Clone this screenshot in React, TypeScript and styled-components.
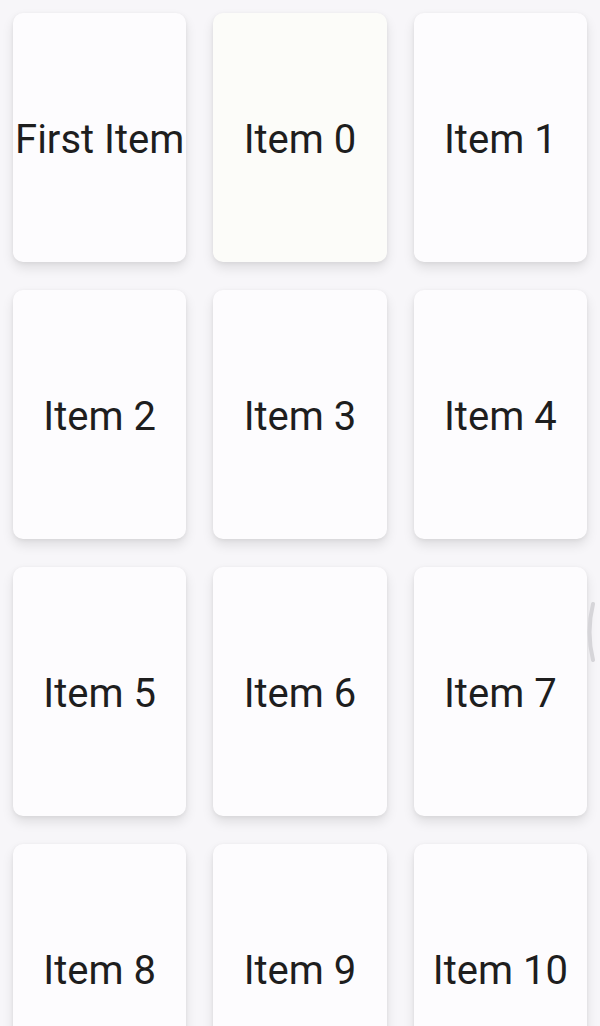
import React from 'react';
import styled, { createGlobalStyle } from 'styled-components';

const GlobalStyle = createGlobalStyle`
  html, body {
    margin: 0;
    padding: 0;
    background: #f7f6f9;
  }
  body {
    font-family: Roboto, 'Noto Sans', sans-serif;
  }
`;

const Page = styled.div`
  position: relative;
  width: 600px;
  height: 1026px;
  overflow: hidden;
  box-sizing: border-box;
  padding: 13px 13px 0 13px;
`;

const Grid = styled.div`
  display: grid;
  grid-template-columns: repeat(3, 1fr);
  grid-auto-rows: 249px;
  column-gap: 27px;
  row-gap: 28px;
`;

const Card = styled.div<{ $tint?: boolean }>`
  display: flex;
  align-items: center;
  justify-content: center;
  padding-top: 4px;
  box-sizing: border-box;
  background: ${(p) => (p.$tint ? '#fcfcf9' : '#fdfcfe')};
  border-radius: 10px;
  box-shadow: 0 6px 12px rgba(0, 0, 0, 0.1), 0 1px 4px rgba(0, 0, 0, 0.06);
`;

const Label = styled.span`
  font-size: 40px;
  color: #1e1e1e;
  white-space: nowrap;
`;

const ScrollEdge = styled.svg`
  position: absolute;
  right: 4px;
  top: 602px;
`;

const items = ['First Item', ...Array.from({ length: 11 }, (_, i) => `Item ${i}`)];

const App = () => {
  return (
    <Page>
      <GlobalStyle />
      <Grid>
        {items.map((label, i) => (
          <Card key={label} $tint={i === 1}>
            <Label>{label}</Label>
          </Card>
        ))}
      </Grid>
      <ScrollEdge width="12" height="60" viewBox="0 0 12 60">
        <path d="M9 2 Q2 30 9 58" fill="none" stroke="#d6d5d9" strokeWidth="4" strokeLinecap="round" />
      </ScrollEdge>
    </Page>
  );
};

export default App;
